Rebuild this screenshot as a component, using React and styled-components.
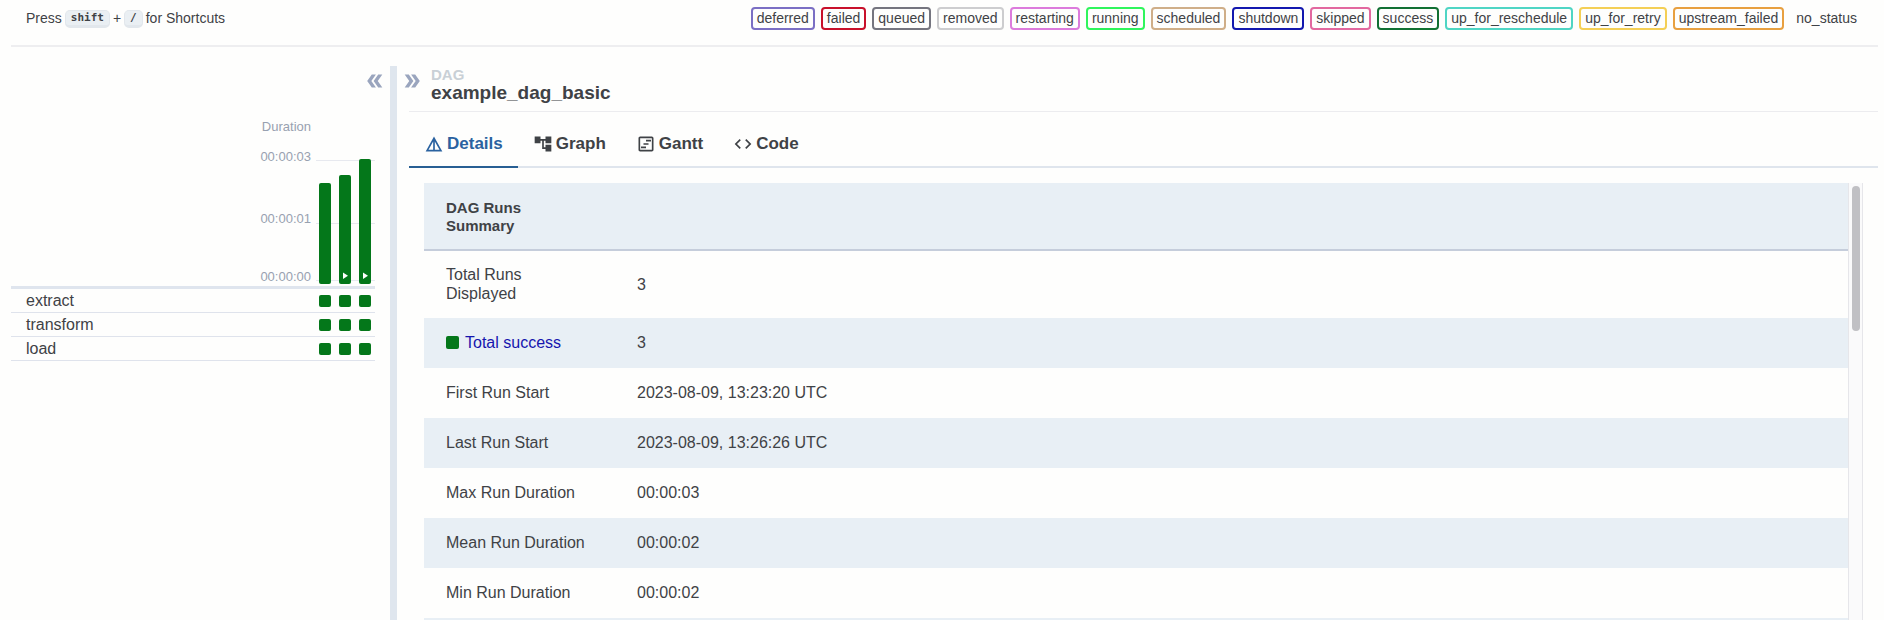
import React, { useState } from "react";
import styled, { createGlobalStyle } from "styled-components";
import {
  MdAccountTree,
  MdCode,
  MdDetails,
  MdDoubleArrow,
  MdOutlineViewTimeline,
} from "react-icons/md";

const GlobalStyle = createGlobalStyle`
  *, *::before, *::after { box-sizing: border-box; }
  body {
    margin: 0;
    background: #fefefd;
    color: #3f4246;
    font-family: "Liberation Sans", Arial, sans-serif;
    font-size: 16px;
  }
`;

const SUCCESS = "#04771a";

const Page = styled.div`
  display: flex;
  flex-direction: column;
  height: 100vh;
  padding: 0 6px 0 11px;
  overflow: hidden;
`;

const TopBar = styled.header`
  display: flex;
  align-items: flex-start;
  justify-content: space-between;
  flex: none;
  padding: 7px 15px 15px;
  border-bottom: 2px solid #eeeef0;
  font-size: 14px;
  line-height: 23px;
  white-space: nowrap;
`;

const Shortcuts = styled.div`
  display: flex;
  align-items: center;
  gap: 3px;
`;

const Key = styled.kbd`
  padding: 0 5px;
  border: 1px solid #e2e7ec;
  border-bottom-width: 3px;
  border-radius: 5px;
  background: #eaeff3;
  font: bold 11px/14px "DejaVu Sans Mono", monospace;
`;

const Legend = styled.ul`
  display: flex;
  gap: 6px;
  margin: 0;
  padding: 0;
  list-style: none;
`;

const Status = styled.li`
  padding: 0 4px;
  border: 2px solid ${(p) => p.$color};
  border-radius: 4px;
  line-height: 19px;
`;

const Main = styled.main`
  display: flex;
  flex: 1;
  min-height: 0;
  padding-top: 19px;
`;

const GridPanel = styled.section`
  display: flex;
  flex-direction: column;
  flex: none;
  width: 379px;
`;

const IconButton = styled.button`
  display: flex;
  flex: none;
  align-self: ${(p) => (p.$end ? "flex-end" : "flex-start")};
  margin: 4px 4px 0;
  padding: 0;
  border: 0;
  background: none;
  color: #9aa5be;
  font-size: 22px;
  cursor: pointer;

  svg {
    transform: ${(p) => (p.$end ? "rotate(180deg)" : "none")};
  }
`;

const Chart = styled.div`
  display: flex;
  align-items: flex-end;
  justify-content: flex-end;
  gap: 5px;
  margin: 27px 15px 0 0;
  border-bottom: 3px solid #dfe5ee;
  color: #98a1b0;
  font-size: 13px;
  line-height: 16px;
`;

const Axis = styled.div`
  display: grid;
  grid-template-rows: 30px 62px 58px 17px;
  justify-items: end;
`;

const Bars = styled.svg`
  display: block;
  width: 59px;
  height: 127px;
`;

const TaskList = styled.ul`
  margin: 0 15px 0 0;
  padding: 0;
  list-style: none;
`;

const TaskRow = styled.li`
  display: flex;
  align-items: center;
  justify-content: space-between;
  padding: 0 4px 0 15px;
  border-bottom: 1px solid #dfe3ec;
  font-size: 16px;
  line-height: 23px;
`;

const Instances = styled.div`
  display: flex;
  gap: 8px;
`;

const Square = styled.span`
  flex: none;
  width: ${(p) => p.$size}px;
  height: ${(p) => p.$size}px;
  border-radius: 2px;
  background: ${SUCCESS};
`;

const Divider = styled.div`
  flex: none;
  width: 7px;
  background: #dfe6ee;
`;

const DetailPanel = styled.section`
  display: flex;
  flex: 1;
  flex-direction: column;
  min-width: 0;
`;

const Heading = styled.div`
  display: flex;
  flex: none;
  height: 45px;
`;

const Titles = styled.div`
  padding: 1px 0 0 4px;
`;

const Kind = styled.div`
  color: #c9d0d6;
  font-size: 15px;
  font-weight: bold;
  line-height: 16px;
`;

const DagName = styled.h1`
  margin: 0;
  font-size: 19px;
  line-height: 20px;
`;

const TabList = styled.div`
  display: flex;
  flex: none;
  margin-left: 12px;
  padding-top: 8px;
  border-top: 1px solid #ececef;
  box-shadow: inset 0 -2px #dfe5ed;
`;

const Tab = styled.button`
  display: flex;
  align-items: center;
  gap: 3px;
  height: 48px;
  padding: 2px 15px 0;
  border: 0;
  border-bottom: 2px solid ${(p) => (p.$active ? "#285f93" : "transparent")};
  background: none;
  color: ${(p) => (p.$active ? "#2a62a0" : "#3f4246")};
  font: bold 17px/20px "Liberation Sans", Arial, sans-serif;
  cursor: pointer;

  svg {
    width: 20px;
    height: 20px;
  }
`;

const Content = styled.div`
  display: flex;
  flex: 1;
  min-height: 0;
  margin: 15px 15px 0 27px;
`;

const TableArea = styled.div`
  flex: 1;
  min-width: 0;
  overflow: hidden;
`;

const Table = styled.table`
  width: 100%;
  border-collapse: separate;
  border-spacing: 0;
  table-layout: fixed;
  text-align: left;
`;

const LabelColumn = styled.col`
  width: 191px;
`;

const HeadCell = styled.th`
  padding: 16px 22px 14px;
  border-bottom: 2px solid #c5cddb;
  background: #e8eff5;
  font-size: 15px;
  line-height: 18px;
`;

const Row = styled.tr`
  background: ${(p) => (p.$striped ? "#e8eff5" : "transparent")};
`;

const Cell = styled.td`
  height: 50px;
  padding: 14px 22px 15px;
  line-height: 19px;
`;

const StateLink = styled.a`
  display: flex;
  align-items: center;
  gap: 6px;
  color: #1515ae;
  text-decoration: none;
`;

const ScrollTrack = styled.div`
  flex: none;
  width: 15px;
  padding: 3px;
  border: solid #e6e6ea;
  border-width: 0 1px;
  background: #fafafb;
`;

const ScrollThumb = styled.div`
  width: 8px;
  height: 145px;
  border-radius: 4px;
  background: #c0c0c4;
`;

const statuses = [
  ["deferred", "#7b6fc4"],
  ["failed", "#c8102a"],
  ["queued", "#75757f"],
  ["removed", "#cdcdcf"],
  ["restarting", "#dc7bdc"],
  ["running", "#2ff55c"],
  ["scheduled", "#cfae88"],
  ["shutdown", "#1318ae"],
  ["skipped", "#e2689f"],
  ["success", "#117033"],
  ["up_for_reschedule", "#4fd5c4"],
  ["up_for_retry", "#f4cf55"],
  ["upstream_failed", "#e8a040"],
  ["no_status", "transparent"],
];

const runs = [
  { id: 1, height: 101, manual: false },
  { id: 2, height: 109, manual: true },
  { id: 3, height: 125, manual: true },
];

const tasks = ["extract", "transform", "load"];

const tabs = [
  ["Details", MdDetails],
  ["Graph", MdAccountTree],
  ["Gantt", MdOutlineViewTimeline],
  ["Code", MdCode],
];

const summary = [
  { label: "Total Runs Displayed", value: "3" },
  { label: "Total success", value: "3", link: true },
  { label: "First Run Start", value: "2023-08-09, 13:23:20 UTC" },
  { label: "Last Run Start", value: "2023-08-09, 13:26:26 UTC" },
  { label: "Max Run Duration", value: "00:00:03" },
  { label: "Mean Run Duration", value: "00:00:02" },
  { label: "Min Run Duration", value: "00:00:02" },
  { label: "", value: "" },
];

function DurationBars() {
  return (
    <Bars viewBox="0 0 59 127" aria-hidden="true">
      {[1, 64, 121].map((y) => (
        <rect key={y} x="0" y={y} width="59" height="1" fill="#e7e9ef" />
      ))}
      {runs.map((run, i) => {
        const x = 3 + i * 20;
        return (
          <g key={run.id}>
            <rect x={x} y={125 - run.height} width="12" height={run.height} rx="2" fill={SUCCESS} />
            {run.manual && <path d={`M${x + 4} 113.5v6.5l5-3.25z`} fill="#fff" />}
          </g>
        );
      })}
    </Bars>
  );
}

export default function App() {
  const [active, setActive] = useState("Details");

  return (
    <Page>
      <GlobalStyle />
      <TopBar>
        <Shortcuts>
          <span>Press</span>
          <Key>shift</Key>
          <span>+</span>
          <Key>/</Key>
          <span>for Shortcuts</span>
        </Shortcuts>
        <Legend>
          {statuses.map(([name, color]) => (
            <Status key={name} $color={color}>{name}</Status>
          ))}
        </Legend>
      </TopBar>

      <Main>
        <GridPanel>
          <IconButton $end aria-label="Collapse grid">
            <MdDoubleArrow />
          </IconButton>
          <Chart>
            <Axis>
              <span>Duration</span>
              <span>00:00:03</span>
              <span>00:00:01</span>
              <span>00:00:00</span>
            </Axis>
            <DurationBars />
          </Chart>
          <TaskList>
            {tasks.map((task) => (
              <TaskRow key={task}>
                <span>{task}</span>
                <Instances>
                  {runs.map((run) => (
                    <Square key={run.id} $size={12} />
                  ))}
                </Instances>
              </TaskRow>
            ))}
          </TaskList>
        </GridPanel>

        <Divider />

        <DetailPanel>
          <Heading>
            <IconButton aria-label="Collapse details">
              <MdDoubleArrow />
            </IconButton>
            <Titles>
              <Kind>DAG</Kind>
              <DagName>example_dag_basic</DagName>
            </Titles>
          </Heading>

          <TabList role="tablist">
            {tabs.map(([name, Icon]) => (
              <Tab
                key={name}
                role="tab"
                aria-selected={active === name}
                $active={active === name}
                onClick={() => setActive(name)}
              >
                <Icon />
                {name}
              </Tab>
            ))}
          </TabList>

          <Content>
            <TableArea>
              <Table>
                <colgroup>
                  <LabelColumn />
                  <col />
                </colgroup>
                <thead>
                  <tr>
                    <HeadCell>DAG Runs Summary</HeadCell>
                    <HeadCell />
                  </tr>
                </thead>
                <tbody>
                  {summary.map((row, i) => (
                    <Row key={i} $striped={i % 2 === 1}>
                      <Cell>
                        {row.link ? (
                          <StateLink href="#success">
                            <Square $size={13} />
                            {row.label}
                          </StateLink>
                        ) : (
                          row.label
                        )}
                      </Cell>
                      <Cell>{row.value}</Cell>
                    </Row>
                  ))}
                </tbody>
              </Table>
            </TableArea>
            <ScrollTrack>
              <ScrollThumb />
            </ScrollTrack>
          </Content>
        </DetailPanel>
      </Main>
    </Page>
  );
}
